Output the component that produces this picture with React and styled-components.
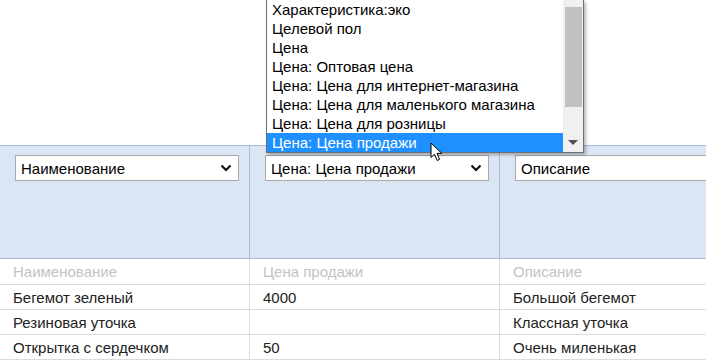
import styled, { createGlobalStyle } from "styled-components";

const GlobalStyle = createGlobalStyle`
  body {
    margin: 0;
    background: #fff;
    font-family: "Liberation Sans", Arial, sans-serif;
    overflow: hidden;
  }
`;

const columns = [
  { key: "name", value: "Наименование", label: "Наименование" },
  { key: "price", value: "Цена: Цена продажи", label: "Цена продажи" },
  { key: "desc", value: "Описание", label: "Описание" },
];

const rows = [
  { name: "Бегемот зеленый", price: "4000", desc: "Большой бегемот" },
  { name: "Резиновая уточка", price: "", desc: "Классная уточка" },
  { name: "Открытка с сердечком", price: "50", desc: "Очень миленькая" },
];

const options = [
  "Характеристика:эко",
  "Целевой пол",
  "Цена",
  "Цена: Оптовая цена",
  "Цена: Цена для интернет-магазина",
  "Цена: Цена для маленького магазина",
  "Цена: Цена для розницы",
  "Цена: Цена продажи",
];

function Chevron() {
  return (
    <svg width="12" height="8" viewBox="0 0 12 8">
      <path d="M1.5 1.5 L6 6 L10.5 1.5" fill="none" stroke="#111" strokeWidth="2.2" />
    </svg>
  );
}

function Pointer() {
  return (
    <svg width="14" height="20" viewBox="0 0 14 20">
      <path
        d="M1 1 L1 15.5 L4.5 12.3 L7.2 18.5 L9.6 17.4 L7 11.4 L11.8 11.4 Z"
        fill="#fff"
        stroke="#000"
        strokeWidth="1"
        strokeLinejoin="round"
      />
    </svg>
  );
}

export default function App() {
  return (
    <>
      <GlobalStyle />
      <Page>
        <TopArea />
        <Table>
          <HeaderRow>
            {columns.map((c) => (
              <HeaderCell key={c.key}>
                <Select>
                  <span>{c.value}</span>
                  <Chevron />
                </Select>
              </HeaderCell>
            ))}
          </HeaderRow>
          <Row $first>
            {columns.map((c) => (
              <Cell key={c.key} $muted>
                {c.label}
              </Cell>
            ))}
          </Row>
          {rows.map((r, i) => (
            <Row key={i}>
              {columns.map((c) => (
                <Cell key={c.key}>{r[c.key]}</Cell>
              ))}
            </Row>
          ))}
        </Table>

        <ListBox>
          <Options>
            {options.map((o, i) => (
              <Option key={o} $active={i === options.length - 1}>
                {o}
              </Option>
            ))}
          </Options>
          <ScrollBar>
            <Thumb />
            <ArrowDown />
          </ScrollBar>
        </ListBox>
        <Cursor>
          <Pointer />
        </Cursor>
      </Page>
    </>
  );
}

const Page = styled.div`
  position: relative;
  width: 706px;
  height: 360px;
  overflow: hidden;
`;

const TopArea = styled.div`
  height: 145px;
`;

const Table = styled.div`
  display: flex;
  flex-direction: column;
  width: 750px;
`;

const HeaderRow = styled.div`
  display: flex;
  background: #dae6f3;
  border-top: 1px solid #a9b9d1;
  border-bottom: 1px solid #a9b9d1;
  height: 112px;
`;

const HeaderCell = styled.div`
  width: 250px;
  box-sizing: border-box;
  border-right: 1px solid #a9b9d1;
  padding: 9px 10px 0 15px;
`;

const Select = styled.div`
  box-sizing: border-box;
  width: 224px;
  height: 26px;
  background: #fff;
  border: 1px solid #a9a9a9;
  display: flex;
  align-items: center;
  justify-content: space-between;
  padding: 0 6px 0 5px;
  font-size: 15px;
  color: #000;
`;

const Row = styled.div`
  display: flex;
  height: ${(p) => (p.$first ? "25px" : "24px")};
  border-bottom: 1px solid #dcdcdc;
`;

const Cell = styled.div`
  width: 250px;
  box-sizing: border-box;
  border-right: 1px solid #dcdcdc;
  padding: 0 12px 0 13px;
  display: flex;
  align-items: center;
  font-size: 15px;
  color: ${(p) => (p.$muted ? "#c3c3c3" : "#222")};
`;

const ListBox = styled.div`
  position: absolute;
  left: 266px;
  top: 0;
  width: 318px;
  box-sizing: border-box;
  display: flex;
  background: #fff;
  border: 1px solid #6f6f6f;
  border-top: none;
  box-shadow: 2px 2px 3px rgba(0, 0, 0, 0.28);
`;

const Options = styled.div`
  flex: 1;
  display: flex;
  flex-direction: column;
`;

const Option = styled.div`
  height: 19px;
  line-height: 19px;
  padding-left: 5px;
  font-size: 15px;
  white-space: nowrap;
  color: ${(p) => (p.$active ? "#fff" : "#000")};
  background: ${(p) => (p.$active ? "#1e90ff" : "transparent")};
`;

const ScrollBar = styled.div`
  position: relative;
  width: 20px;
  background: #f0f0f0;
  display: flex;
  flex-direction: column;
  align-items: center;
`;

const Thumb = styled.div`
  margin-top: 7px;
  width: 17px;
  height: 100px;
  background: #c1c1c1;
`;

const ArrowDown = styled.div`
  position: absolute;
  bottom: 7px;
  left: 5px;
  width: 0;
  height: 0;
  border-left: 5px solid transparent;
  border-right: 5px solid transparent;
  border-top: 5px solid #505050;
`;

const Cursor = styled.div`
  position: absolute;
  left: 430px;
  top: 142px;
  line-height: 0;
`;
